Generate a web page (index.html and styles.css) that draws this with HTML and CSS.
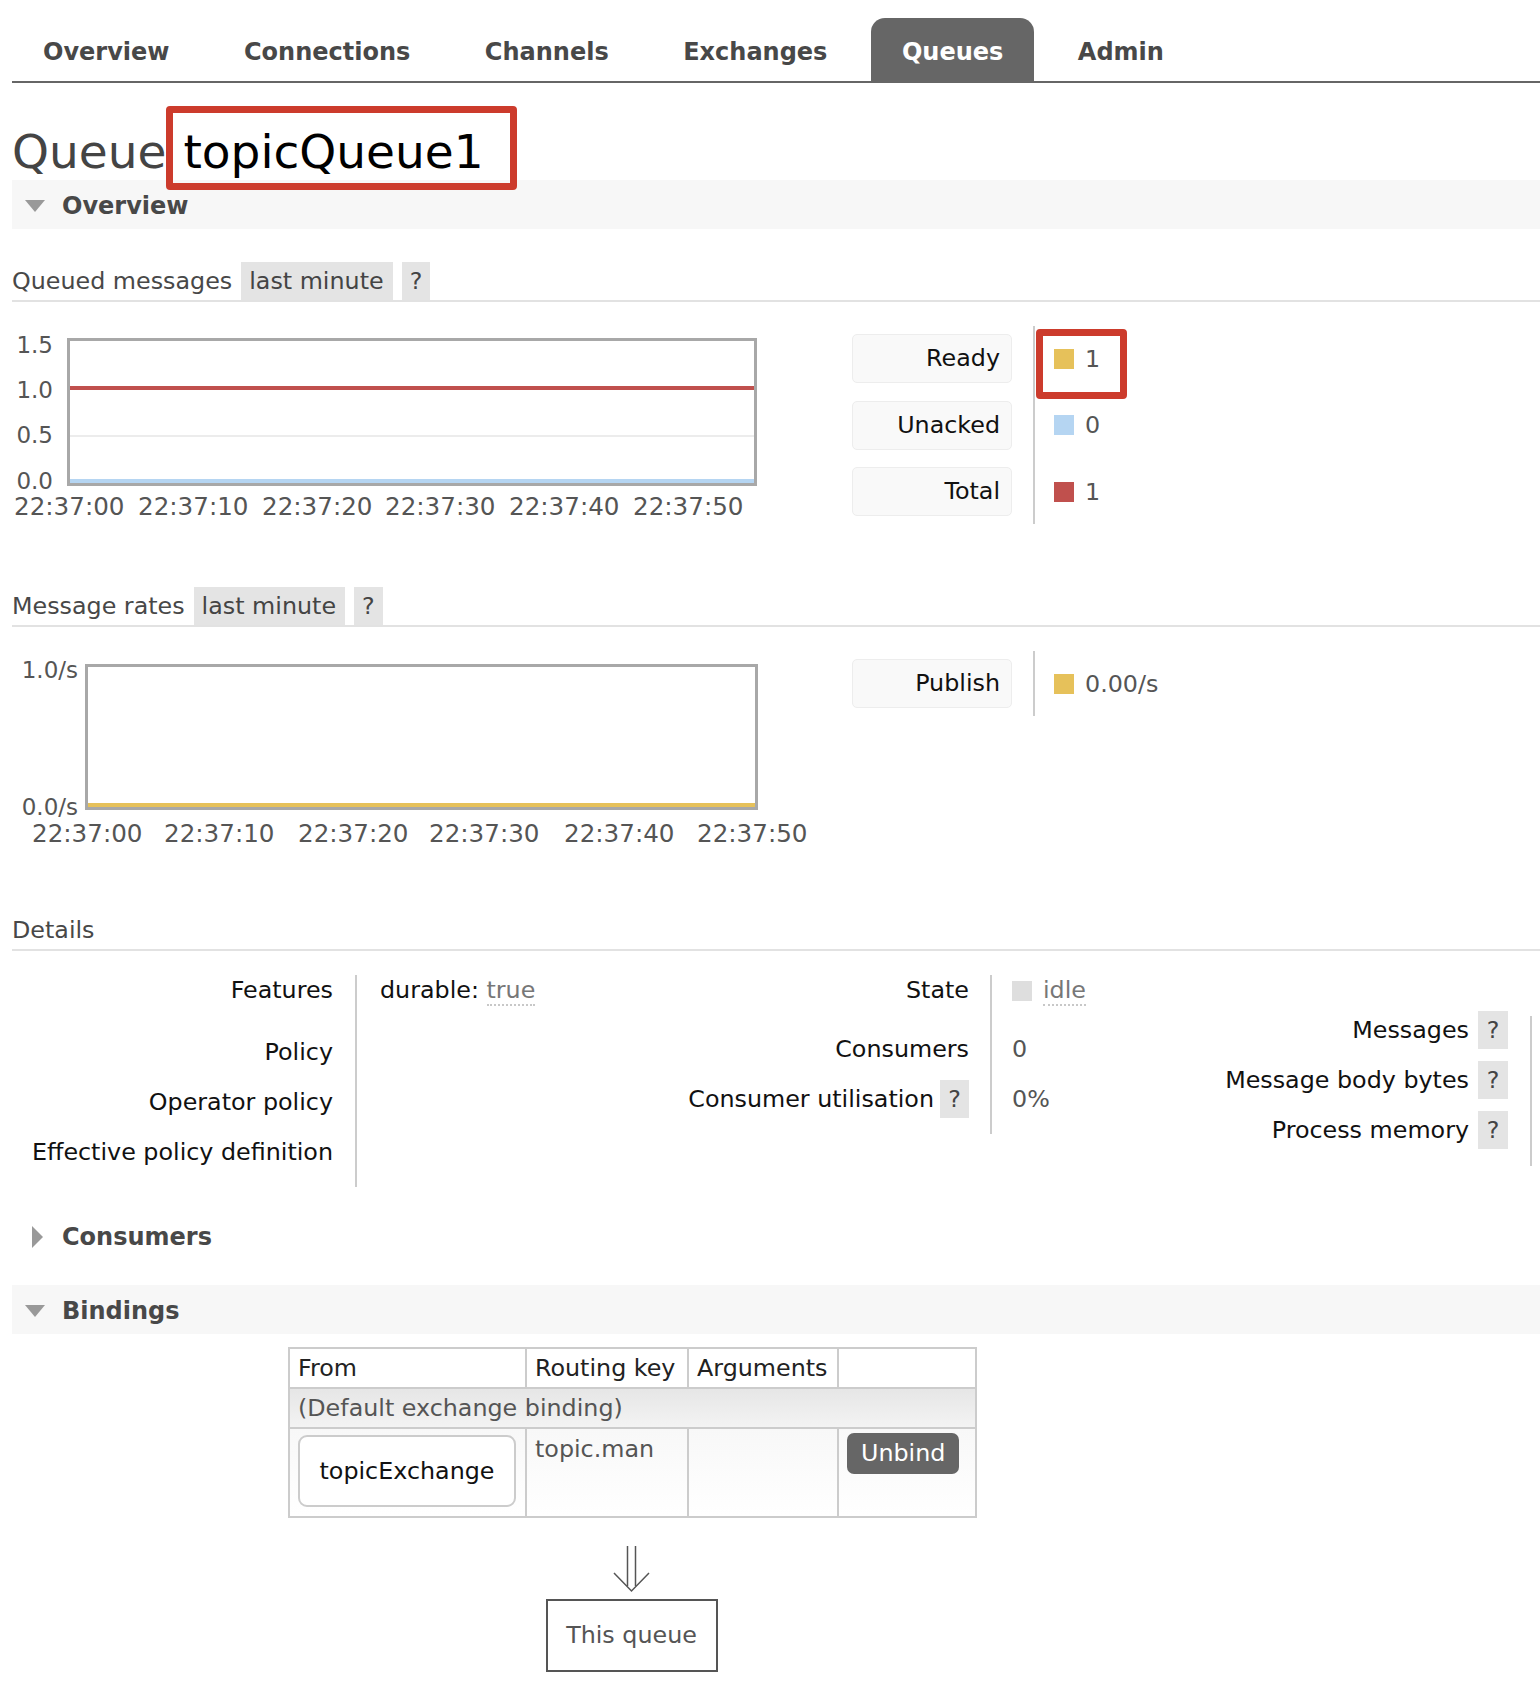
FILE: index.html
```html
<!DOCTYPE html>
<html lang="en">
<head>
<meta charset="utf-8">
<title>RabbitMQ Management - Queue topicQueue1</title>
<link rel="stylesheet" href="styles.css">
</head>
<body>
<div class="page">
  <ul class="tabs">
    <li class="tab">Overview</li>
    <li class="tab">Connections</li>
    <li class="tab">Channels</li>
    <li class="tab">Exchanges</li>
    <li class="tab active">Queues</li>
    <li class="tab">Admin</li>
  </ul>

  <h1 class="title">Queue<span class="qname">topicQueue1<span class="mark mark-title"></span></span></h1>

  <section class="section">
    <h2 class="section-head"><span class="tri-down"></span>Overview</h2>

    <div class="h3row"><span>Queued messages</span><span class="chip">last minute</span><span class="chip help">?</span></div>
    <div class="chart-row">
      <div class="chart">
        <div class="plot plot1">
          <div class="grid-line g05"></div>
          <div class="series red-line"></div>
          <div class="series blue-line"></div>
        </div>
        <span class="ylab y1" style="top:7px">1.5</span>
        <span class="ylab y1" style="top:52px">1.0</span>
        <span class="ylab y1" style="top:97px">0.5</span>
        <span class="ylab y1" style="top:143px">0.0</span>
        <span class="xlab x1" style="left:2px">22:37:00</span>
        <span class="xlab x1" style="left:126px">22:37:10</span>
        <span class="xlab x1" style="left:250px">22:37:20</span>
        <span class="xlab x1" style="left:373px">22:37:30</span>
        <span class="xlab x1" style="left:497px">22:37:40</span>
        <span class="xlab x1" style="left:621px">22:37:50</span>
      </div>
      <div class="legend">
        <div class="lg-col lg-labels">
          <div class="lg-label">Ready</div>
          <div class="lg-label">Unacked</div>
          <div class="lg-label">Total</div>
        </div>
        <div class="lg-col lg-values">
          <div class="lg-val"><span class="sw sw-yellow"></span>1<span class="mark mark-ready"></span></div>
          <div class="lg-val"><span class="sw sw-blue"></span>0</div>
          <div class="lg-val"><span class="sw sw-red"></span>1</div>
        </div>
      </div>
    </div>

    <div class="h3row after-chart"><span>Message rates</span><span class="chip">last minute</span><span class="chip help">?</span></div>
    <div class="chart-row">
      <div class="chart">
        <div class="plot plot2">
          <div class="series yellow-line"></div>
        </div>
        <span class="ylab y2" style="top:7px">1.0/s</span>
        <span class="ylab y2" style="top:144px">0.0/s</span>
        <span class="xlab x2" style="left:20px">22:37:00</span>
        <span class="xlab x2" style="left:152px">22:37:10</span>
        <span class="xlab x2" style="left:286px">22:37:20</span>
        <span class="xlab x2" style="left:417px">22:37:30</span>
        <span class="xlab x2" style="left:552px">22:37:40</span>
        <span class="xlab x2" style="left:685px">22:37:50</span>
      </div>
      <div class="legend">
        <div class="lg-col lg-labels">
          <div class="lg-label">Publish</div>
        </div>
        <div class="lg-col lg-values">
          <div class="lg-val"><span class="sw sw-yellow"></span>0.00/s</div>
        </div>
      </div>
    </div>

    <div class="h3row after-chart"><span>Details</span></div>
    <div class="details">
      <div class="kv kv-left">
        <div class="k first">Features</div><div class="v first">durable: <span class="abbr">true</span></div>
        <div class="k">Policy</div><div class="v"></div>
        <div class="k">Operator policy</div><div class="v"></div>
        <div class="k">Effective policy definition</div><div class="v"></div>
      </div>
      <div class="kv kv-mid">
        <div class="k">State</div><div class="v"><span class="sw sw-idle"></span><span class="abbr">idle</span></div>
        <div class="k">Consumers</div><div class="v">0</div>
        <div class="k">Consumer utilisation<span class="help-i">?</span></div><div class="v">0%</div>
      </div>
      <div class="kv kv-right">
        <div class="k">Messages<span class="help-i">?</span></div><div class="v"></div>
        <div class="k">Message body bytes<span class="help-i">?</span></div><div class="v"></div>
        <div class="k">Process memory<span class="help-i">?</span></div><div class="v"></div>
      </div>
    </div>
  </section>

  <section class="section">
    <h2 class="section-head closed"><span class="tri-right"></span>Consumers</h2>
  </section>

  <section class="section">
    <h2 class="section-head bind-head"><span class="tri-down"></span>Bindings</h2>
    <table class="bindings">
      <colgroup><col class="c1"><col class="c2"><col class="c3"><col class="c4"></colgroup>
      <thead>
        <tr><th>From</th><th>Routing key</th><th>Arguments</th><th></th></tr>
      </thead>
      <tbody>
        <tr class="default-row"><td colspan="4">(Default exchange binding)</td></tr>
        <tr class="data-row">
          <td><span class="exch">topicExchange</span></td>
          <td class="rk">topic.man</td>
          <td></td>
          <td><span class="btn">Unbind</span></td>
        </tr>
      </tbody>
    </table>
    <div class="flow">
      <svg class="arrow" width="40" height="47" viewBox="0 0 40 47" aria-hidden="true">
        <line x1="15.5" y1="0" x2="15.5" y2="40" stroke="#555" stroke-width="1.5"/>
        <line x1="23.5" y1="0" x2="23.5" y2="40" stroke="#555" stroke-width="1.5"/>
        <polyline points="2,27 19.5,45 37,27" fill="none" stroke="#555" stroke-width="1.5"/>
      </svg>
      <div class="this-queue">This queue</div>
    </div>
  </section>
</div>
</body>
</html>
```

FILE: styles.css
```css
* { box-sizing: border-box; }
html, body { margin: 0; padding: 0; background: #fff; }
body {
  font-family: "DejaVu Sans", Verdana, sans-serif;
  font-size: 23.8px;
  line-height: 28px;
  color: #484848;
}
.page { padding-left: 12px; }

/* tabs */
.tabs {
  display: flex;
  list-style: none;
  margin: 18px 0 0;
  padding: 0;
  height: 65px;
  border-bottom: 2px solid #666;
}
.tab {
  padding: 6px 31px 0;
  line-height: 57px;
  margin-right: 12.5px;
  font-size: 24px;
  font-weight: bold;
  color: #484848;
  border-radius: 14px 14px 0 0;
}
.tab.active { background: #666; color: #fff; }

/* title */
.title {
  margin: 41px 0 0;
  height: 56px;
  font-size: 47px;
  line-height: 56px;
  font-weight: normal;
  color: #444;
  position: relative;
  z-index: 2;
}
.qname {
  position: relative;
  display: inline-block;
  margin-left: 14px;
  padding-left: 3px;
  color: #000;
}
.mark {
  position: absolute;
  border: 7px solid #cc3b2c;
  border-radius: 4px;
  pointer-events: none;
  z-index: 3;
}
.mark-title { left: -14px; top: -18px; width: 351px; height: 84px; }
.mark-ready { left: -18px; top: -5px; width: 91px; height: 70px; }

/* section heads */
.section-head {
  display: flex;
  align-items: center;
  height: 49px;
  margin: 0;
  padding: 2px 0 0 13px;
  background: #f7f7f7;
  font-size: 24px;
  font-weight: bold;
  color: #484848;
}
.tri-down {
  width: 0; height: 0;
  border-left: 10px solid transparent;
  border-right: 10px solid transparent;
  border-top: 12px solid #999;
  margin-right: 17px;
}
.tri-right {
  width: 0; height: 0;
  border-top: 11px solid transparent;
  border-bottom: 11px solid transparent;
  border-left: 11px solid #999;
  margin: 0 19px 0 7px;
}
.section-head.closed { background: none; margin-top: 24px; }
.bind-head { margin-top: 25px; }

/* h3 rows */
.h3row {
  display: flex;
  gap: 9px;
  margin-top: 33px;
  height: 40px;
  line-height: 38px;
  border-bottom: 2px solid #e2e2e2;
  color: #484848;
}
.h3row.after-chart { margin-top: 63px; }
.chip { background: #e4e4e4; padding: 0 9px 0 8px; color: #444; }
.chip.help { padding: 0 8px; }

/* charts */
.chart-row { display: flex; align-items: flex-start; margin-top: 24px; }
.chart { position: relative; flex: none; width: 840px; height: 197px; }
.plot {
  position: absolute;
  border: 3px solid #a8a8a8;
  background: #fff;
  overflow: hidden;
}
.plot1 { left: 55px; top: 12px; width: 690px; height: 148px; }
.plot2 { left: 73px; top: 13px; width: 673px; height: 146px; }
.grid-line { position: absolute; left: 0; right: 0; height: 2px; background: #ececec; }
.g05 { top: 94px; }
.series { position: absolute; left: 0; right: 0; height: 4px; }
.red-line { top: 45px; background: #c0504d; }
.blue-line { bottom: 0; background: #b5d5f2; }
.yellow-line { bottom: 0; background: #e6c15a; }
.ylab {
  position: absolute;
  left: 0;
  text-align: right;
  font-size: 23px;
  line-height: 24px;
  color: #555;
}
.y1 { width: 41px; }
.y2 { width: 66px; }
.xlab { position: absolute; font-size: 24.6px; line-height: 24px; color: #555; }
.x1 { top: 169px; }
.x2 { top: 171px; }

/* legend */
.legend { display: flex; align-items: flex-start; }
.lg-col { display: flex; flex-direction: column; gap: 17.5px; padding: 8px 0; }
.lg-labels { width: 160px; }
.lg-label {
  height: 49px;
  line-height: 47px;
  background: #f9f9f9;
  border: 1px solid #ededed;
  border-radius: 5px;
  text-align: right;
  padding-right: 11px;
  color: #111;
}
.lg-values { margin-left: 21px; border-left: 2px solid #ccc; padding-left: 19px; }
.lg-val { position: relative; height: 49px; display: flex; align-items: center; color: #555; }
.sw { display: inline-block; width: 20px; height: 20px; margin-right: 11px; flex: none; }
.sw-yellow { background: #e6c15a; }
.sw-blue { background: #b5d5f2; }
.sw-red { background: #c0504d; }
.sw-idle { background: #dedede; vertical-align: -3px; }

/* details */
.details { display: flex; align-items: flex-start; margin-top: 24px; }
.kv { display: grid; }
.kv .k { text-align: right; color: #111; }
.kv .v { border-left: 2px solid #ccc; color: #555; }
.kv-left { grid-template-columns: 343px 245px; grid-template-rows: 62px 50px 50px 50px; }
.kv-left .k { padding: 1px 22px 0 0; }
.kv-left .v { padding: 1px 0 0 23px; color: #111; }
.kv-mid { grid-template-columns: 390px 150px; grid-template-rows: 59px 50px 50px; }
.kv-mid .k { padding: 1px 21px 0 0; }
.kv-mid .v { padding: 1px 0 0 20px; }
.kv-right {
  margin-left: auto;
  margin-top: 41px;
  grid-template-columns: auto 10px;
  grid-template-rows: 50px 50px 50px;
}
.kv-right .k { padding: 0 22px 0 40px; }
.abbr { color: #777; border-bottom: 2px dotted #c8c8c8; }
.help-i {
  display: inline-block;
  width: 29px;
  height: 38px;
  line-height: 38px;
  margin: -5px 0 -5px 6px;
  vertical-align: top;
  background: #e4e4e4;
  text-align: center;
  color: #444;
}
.kv-right .help-i { width: 30px; margin-left: 9px; }

/* bindings */
.bindings {
  margin: 13px 0 0 276px;
  width: 687px;
  border-collapse: collapse;
  table-layout: fixed;
}
.bindings .c1 { width: 237px; }
.bindings .c2 { width: 162px; }
.bindings .c3 { width: 150px; }
.bindings .c4 { width: 138px; }
.bindings th, .bindings td { border: 2px solid #ccc; padding: 0 8px; text-align: left; }
.bindings th { height: 40px; font-weight: normal; color: #222; background: #fff; }
.default-row td { height: 40px; color: #555; background: linear-gradient(#e6e6e6, #f3f3f3); }
.data-row td {
  height: 89px;
  vertical-align: top;
  padding-top: 4px;
  background: linear-gradient(#f8f8f8, #fff);
  color: #555;
}
.data-row td.rk { padding-top: 6px; }
.exch {
  display: block;
  margin-top: 2px;
  width: 218px;
  height: 72px;
  line-height: 68px;
  border: 2px solid #ccc;
  border-radius: 9px;
  background: #fff;
  text-align: center;
  color: #111;
}
.btn {
  display: inline-block;
  height: 41px;
  line-height: 41px;
  padding: 0 14px;
  border-radius: 7px;
  background: #666;
  color: #fff;
}
.flow {
  width: 687px;
  margin-left: 276px;
  display: flex;
  flex-direction: column;
  align-items: center;
  padding-top: 28px;
}
.arrow { display: block; }
.this-queue {
  margin-top: 6px;
  width: 172px;
  height: 73px;
  line-height: 69px;
  border: 2px solid #555;
  text-align: center;
  color: #555;
}
```
